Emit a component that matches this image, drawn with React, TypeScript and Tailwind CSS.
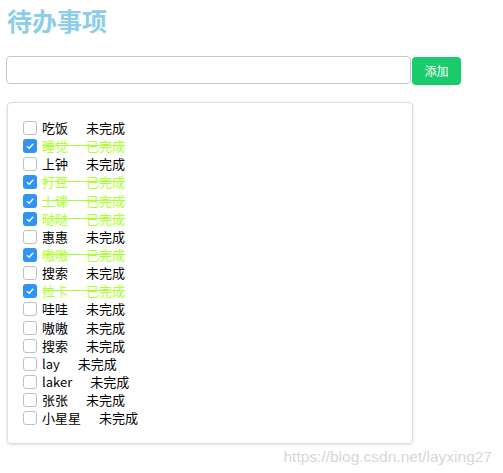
import React, { useState } from 'react';

interface Todo {
  name: string;
  done: boolean;
}

const initialTodos: Todo[] = [
  { name: '吃饭', done: false },
  { name: '睡觉', done: true },
  { name: '上钟', done: false },
  { name: '打豆', done: true },
  { name: '上课', done: true },
  { name: '哒哒', done: true },
  { name: '惠惠', done: false },
  { name: '嗷嗷', done: true },
  { name: '搜索', done: false },
  { name: '拉卡', done: true },
  { name: '哇哇', done: false },
  { name: '嗷嗷', done: false },
  { name: '搜索', done: false },
  { name: 'lay', done: false },
  { name: 'laker', done: false },
  { name: '张张', done: false },
  { name: '小星星', done: false },
];

const Box: React.FC<{ checked: boolean; onClick: () => void }> = ({ checked, onClick }) => {
  if (checked) {
    return (
      <span
        onClick={onClick}
        className="flex h-[14px] w-[14px] shrink-0 items-center justify-center rounded-[3px] bg-[#2f94f2]"
      >
        <svg width="10" height="10" viewBox="0 0 10 10">
          <polyline points="2,5.2 4.2,7.3 8.2,2.8" fill="none" stroke="#fff" strokeWidth="1.3" />
        </svg>
      </span>
    );
  }
  return (
    <span
      onClick={onClick}
      className="h-[14px] w-[14px] shrink-0 rounded-[3px] border border-[#b9c0c8] bg-white"
    />
  );
};

const App: React.FC = () => {
  const [todos, setTodos] = useState<Todo[]>(initialTodos);
  const [text, setText] = useState('');

  const toggle = (i: number) => {
    setTodos(todos.map((t, idx) => (idx === i ? { ...t, done: !t.done } : t)));
  };

  const add = () => {
    if (!text.trim()) return;
    setTodos([...todos, { name: text.trim(), done: false }]);
    setText('');
  };

  return (
    <div
      className="relative h-[473px] w-[503px] overflow-hidden bg-white pl-[6px]"
      style={{ fontFamily: '"Noto Sans CJK SC", "Microsoft YaHei", sans-serif' }}
    >
      <div className="ml-[1px] mt-[8px] text-[25px] font-bold leading-[25px] text-[#8ccdea]">待办事项</div>

      <div className="mt-[23px] flex items-start">
        <input
          value={text}
          onChange={(e) => setText(e.target.value)}
          className="h-[28px] w-[405px] rounded-[4px] border border-[#bccbd9] px-2 text-[13px] outline-none"
        />
        <button
          onClick={add}
          className="ml-[1px] mt-[1px] h-[28px] w-[49px] rounded-[4px] bg-[#19cb6b] text-[12px] text-white"
        >
          添加
        </button>
      </div>

      <div className="ml-[1px] mt-[17px] w-[406px] rounded-[4px] border border-[#d5dde5] pb-[16px] pl-[15px] pt-[16px] shadow-[0_1px_3px_rgba(0,0,0,0.12)]">
        {todos.map((t, i) => (
          <div key={i} className="flex h-[18.15px] items-center text-[13px] leading-[18px]">
            <Box checked={t.done} onClick={() => toggle(i)} />
            <span
              className={
                t.done
                  ? 'ml-[5px] whitespace-pre text-[#adff2f] line-through decoration-[#adff2f]'
                  : 'ml-[5px] whitespace-pre text-black'
              }
            >
              {t.name}
              <span className="tracking-[5px]">{'\u2003'}</span>
              {t.done ? '已完成' : '未完成'}
            </span>
          </div>
        ))}
      </div>

      <div
        className="absolute bottom-[7px] right-[11px] text-[15.5px] leading-[18px] text-[#d6d6d6]"
        style={{ fontFamily: '"Liberation Sans", Arial, sans-serif' }}
      >
        https://blog.csdn.net/layxing27
      </div>
    </div>
  );
};

export default App;
